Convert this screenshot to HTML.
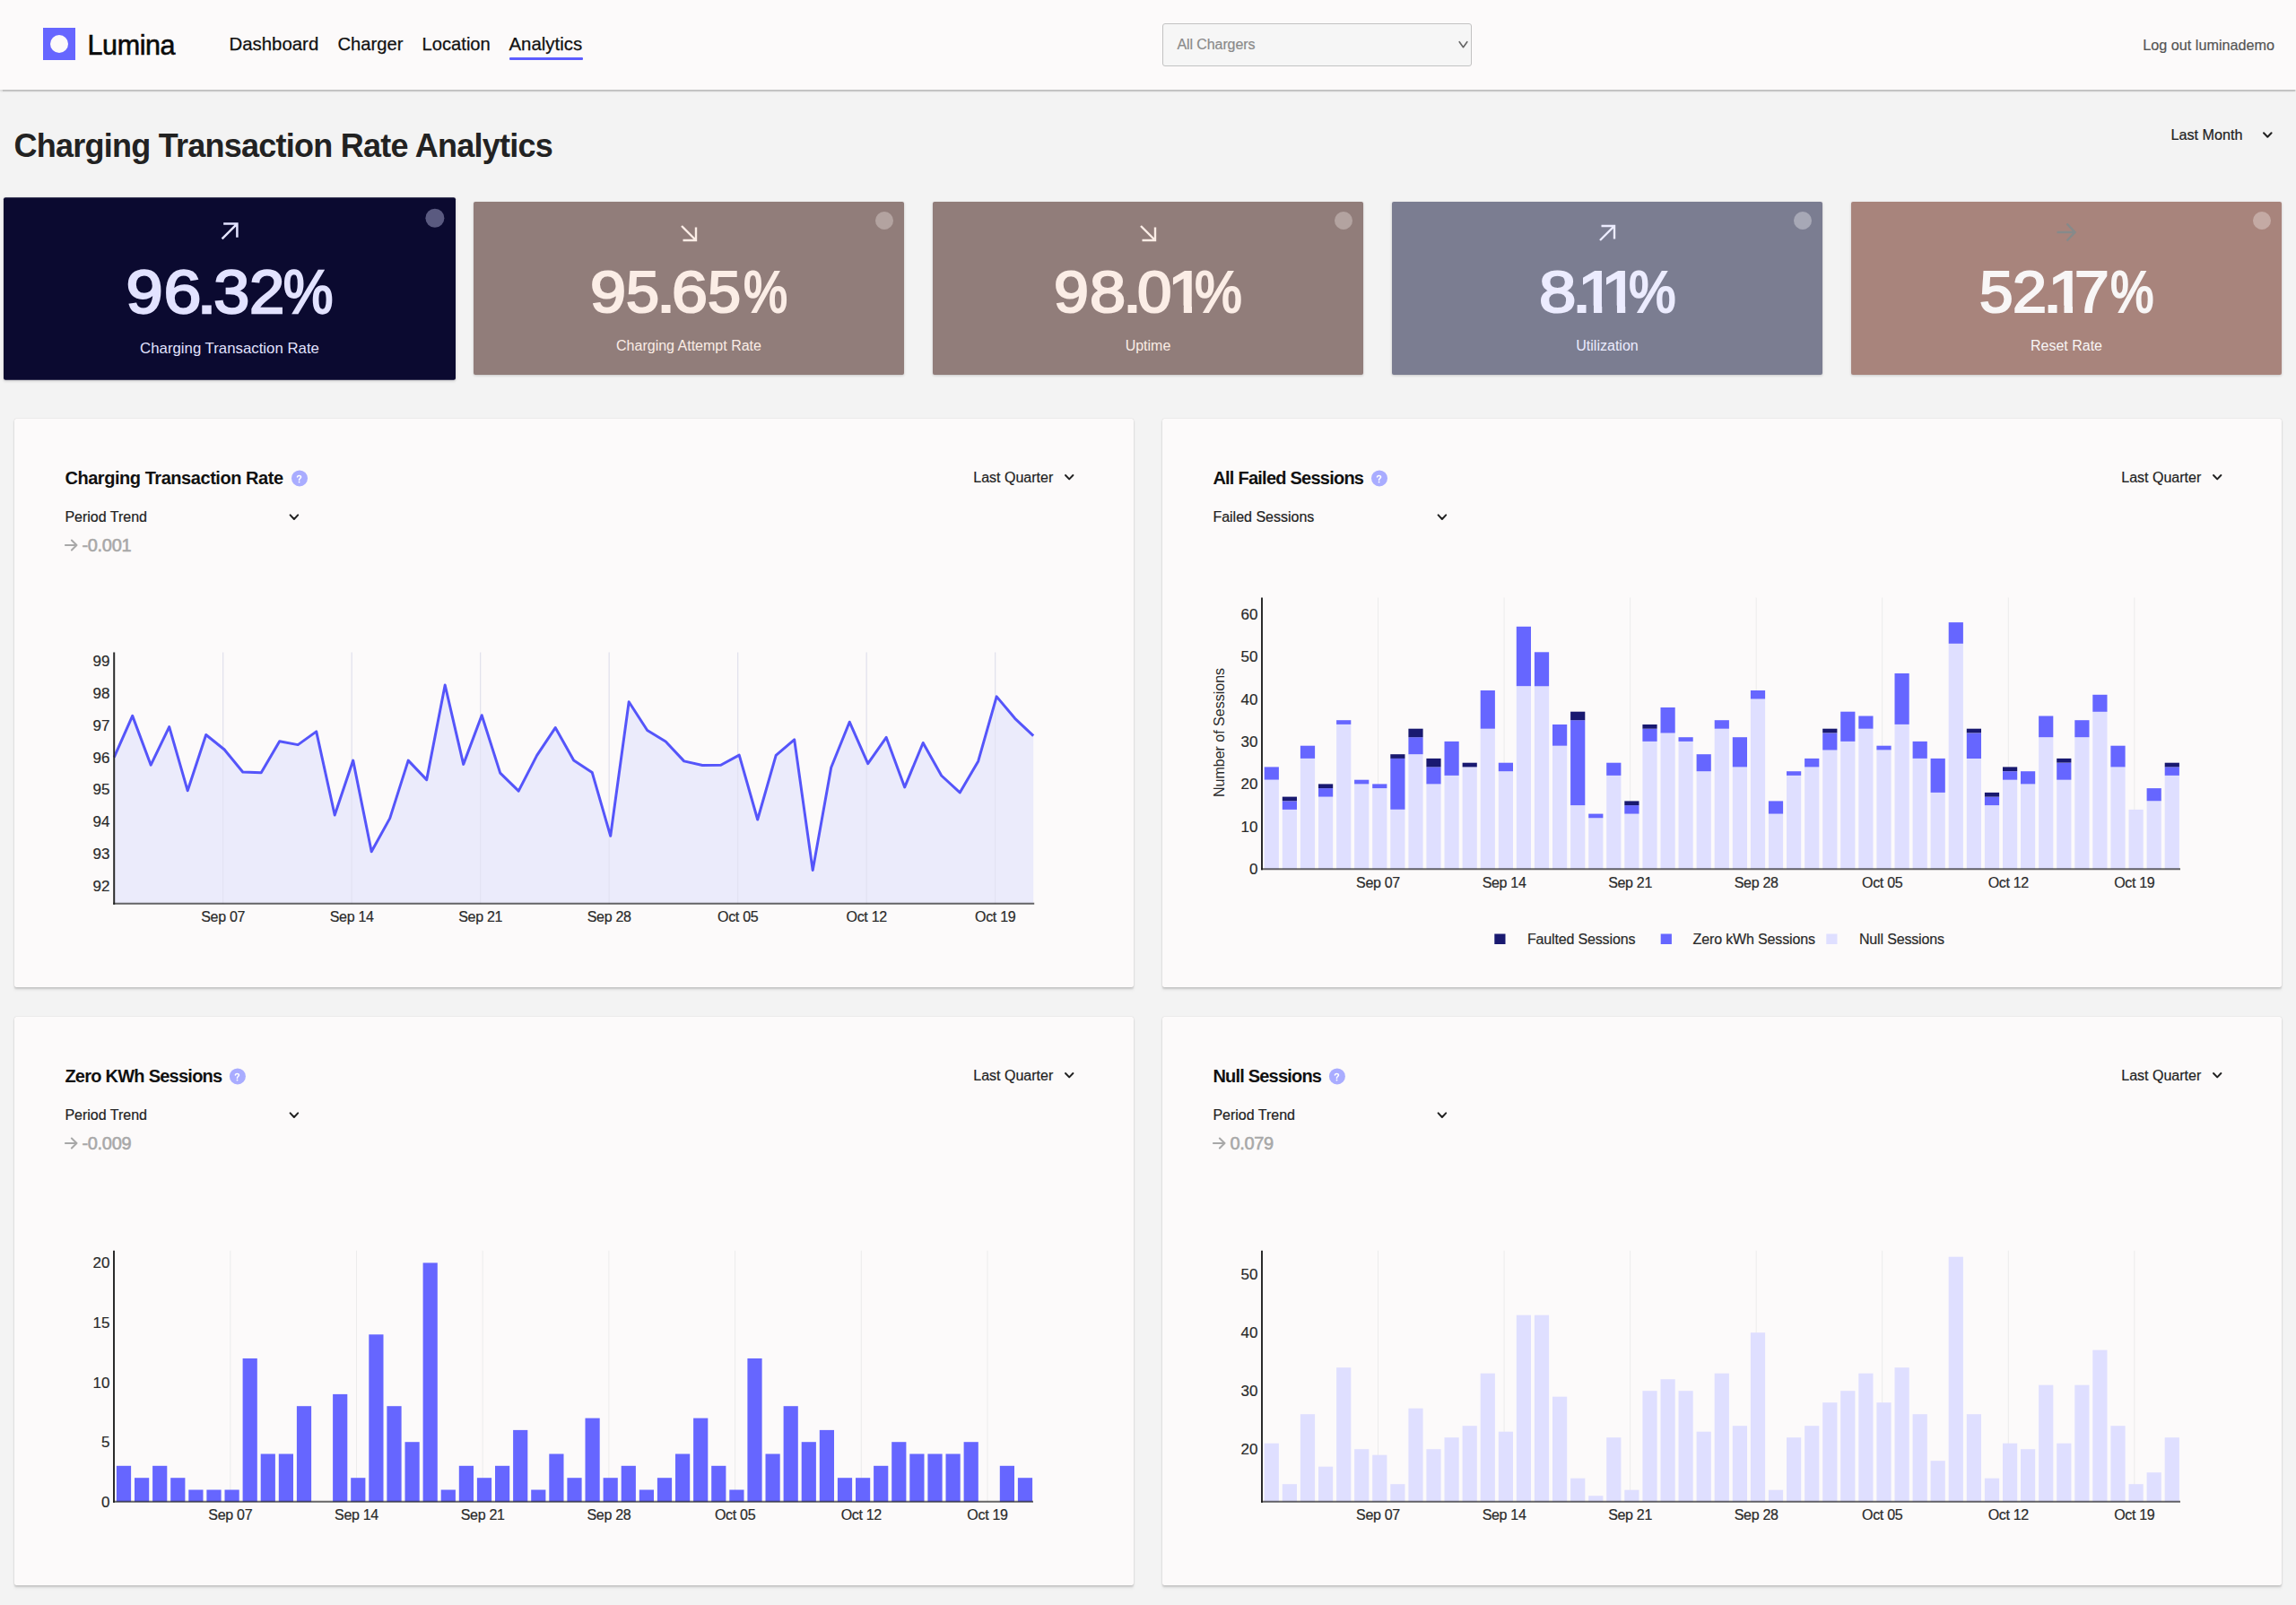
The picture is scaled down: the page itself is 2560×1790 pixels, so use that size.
<!DOCTYPE html>
<html><head><meta charset="utf-8"><title>Lumina Analytics</title>
<style>
*{box-sizing:border-box}
html,body{margin:0;padding:0}
body{width:2560px;height:1790px;overflow:hidden;background:#f3f3f3;font-family:"Liberation Sans", sans-serif;position:relative}
.t{position:absolute;white-space:nowrap;line-height:1;-webkit-text-stroke-width:0.2px}
.nav{-webkit-text-stroke:0.25px #111}
.hdr{position:absolute;left:0;top:0;width:2560px;height:99.5px;background:#fcfafa;box-shadow:0 1.5px 0.8px rgba(0,0,0,.14),0 2px 2.5px rgba(0,0,0,.08)}
.logo{position:absolute;left:48px;top:31.2px;width:36px;height:36px;background:#6666ff}
.logo:after{content:"";position:absolute;left:8px;top:8px;width:20px;height:20px;border-radius:50%;background:#fcfafa}
.uline{position:absolute;left:568px;top:63.5px;width:82px;height:3px;background:#5c5cff;border-radius:1px}
.sel{position:absolute;left:1296px;top:25.5px;width:345px;height:48px;border:1.5px solid #c2c2c2;border-radius:3px;background:#f6f6f6}
.card{position:absolute;border-radius:2px;box-shadow:0 1px 3px rgba(0,0,0,.18)}
.dot{position:absolute;right:12px;top:11.5px;width:20px;height:20px;border-radius:50%}
.arr{position:absolute}
.big{position:absolute;left:0;top:0;width:100%;height:100%}
.g{position:absolute;top:68.36px;font-size:63.5px;line-height:1;font-weight:400;-webkit-text-stroke:2.1px currentColor;transform-origin:0 0;white-space:nowrap}
.lab{position:absolute;left:0;width:100%;text-align:center;top:153.1px;font-size:16px;line-height:1;white-space:nowrap}
.panel{position:absolute;background:#fcfafa;border-radius:2px;box-shadow:0 2px 1.6px rgba(0,0,0,.1),0 2.5px 3.5px rgba(0,0,0,.08),0 0 1.2px rgba(0,0,0,.2)}
svg.ov{position:absolute;left:0;top:0;font-family:"Liberation Sans", sans-serif}
</style></head><body>
<div class="hdr"></div>
<div class="logo"></div>
<div class="t" style="left:97.5px;top:35.0px;font-size:30.5px;font-weight:400;color:#0a0a0a;-webkit-text-stroke:0.6px #0a0a0a;letter-spacing:-0.4px">Lumina</div>
<div class="t nav" style="left:255.5px;top:39.1px;font-size:20.4px;font-weight:400;color:#111;letter-spacing:0px">Dashboard</div>
<div class="t nav" style="left:376.5px;top:39.3px;font-size:20.2px;font-weight:400;color:#111;letter-spacing:0px">Charger</div>
<div class="t nav" style="left:470.5px;top:39.3px;font-size:20.2px;font-weight:400;color:#111;letter-spacing:0px">Location</div>
<div class="t nav" style="left:567.5px;top:39.1px;font-size:20.4px;font-weight:400;color:#111;letter-spacing:0px">Analytics</div>
<div class="uline"></div>
<div class="sel"></div>
<div class="t" style="left:1312.5px;top:42.0px;font-size:16px;font-weight:400;color:#8a8a8a;letter-spacing:-0.1px">All Chargers</div>
<div class="t" style="right:24.0px;top:41.7px;font-size:16.2px;font-weight:400;color:#555;letter-spacing:0px">Log out luminademo</div>
<div class="t" style="left:15.5px;top:144.9px;font-size:36px;font-weight:700;color:#222;letter-spacing:-0.75px;-webkit-text-stroke-width:0">Charging Transaction Rate Analytics</div>
<div class="t" style="left:2420.5px;top:142.4px;font-size:16.2px;font-weight:400;color:#222;letter-spacing:0px">Last Month</div>
<div class="card" style="left:16px;top:224.6px;width:480px;height:193.8px;background:#0b0a30;transform:scale(1.05);">
<div class="dot" style="background:#5a5a80"></div>
<svg class="arr" width="22" height="22" viewBox="0 0 22 22" style="left:228.5px;top:24.8px"><path d="M3,19 L19,3 M4.5,3 H19 V17.5" fill="none" stroke="#e2e2ff" stroke-width="2.4" stroke-linecap="butt" stroke-linejoin="miter"/></svg>
<div class="big" style="color:#e2e2ff"><span class="g" style="left:129.68px;transform:scale(1.1101,1.03)">9</span><span class="g" style="left:170.02px;transform:scale(1.1310,1.03)">6</span><span class="g" style="left:205.07px;transform:scale(1.2143,1.03)">.</span><span class="g" style="left:223.49px;transform:scale(1.0794,1.03)">3</span><span class="g" style="left:261.31px;transform:scale(1.0599,1.03)">2</span><span class="g" style="left:296.96px;transform:scale(0.9400,1.03)">%</span></div>
<div class="lab" style="color:#e2e2ff">Charging Transaction Rate</div>
</div><div class="card" style="left:528px;top:224.6px;width:480px;height:193.8px;background:#917d7a;">
<div class="dot" style="background:#b3a3a0"></div>
<svg class="arr" width="22" height="22" viewBox="0 0 22 22" style="left:228.5px;top:24.8px"><path d="M3,3 L19,19 M19,4.5 V19 H4.5" fill="none" stroke="#fbede6" stroke-width="2.4" stroke-linecap="butt" stroke-linejoin="miter"/></svg>
<div class="big" style="color:#fbede6"><span class="g" style="left:129.53px;transform:scale(1.1344,1.03)">9</span><span class="g" style="left:170.35px;transform:scale(1.0485,1.03)">5</span><span class="g" style="left:204.00px;transform:scale(1.2000,1.03)">.</span><span class="g" style="left:220.74px;transform:scale(1.1313,1.03)">6</span><span class="g" style="left:260.95px;transform:scale(1.0485,1.03)">5</span><span class="g" style="left:301.33px;transform:scale(0.8704,1.03)">%</span></div>
<div class="lab" style="color:#fbede6">Charging Attempt Rate</div>
</div><div class="card" style="left:1040px;top:224.6px;width:480px;height:193.8px;background:#917d7a;">
<div class="dot" style="background:#b3a3a0"></div>
<svg class="arr" width="22" height="22" viewBox="0 0 22 22" style="left:228.5px;top:24.8px"><path d="M3,3 L19,19 M19,4.5 V19 H4.5" fill="none" stroke="#fbede6" stroke-width="2.4" stroke-linecap="butt" stroke-linejoin="miter"/></svg>
<div class="big" style="color:#fbede6"><span class="g" style="left:135.19px;transform:scale(1.1031,1.03)">9</span><span class="g" style="left:174.93px;transform:scale(1.1375,1.03)">8</span><span class="g" style="left:211.66px;transform:scale(1.1875,1.03)">.</span><span class="g" style="left:228.21px;transform:scale(1.0879,1.03)">0</span><span class="g" style="left:261.61px;transform:scale(1.1784,1.03);clip-path:polygon(0 0,100% 0,100% 46.4px,22.9px 46.4px,22.9px 100%,15.1px 100%,15.1px 46.4px,0 46.4px)">1</span><span class="g" style="left:291.76px;transform:scale(0.9352,1.03)">%</span></div>
<div class="lab" style="color:#fbede6">Uptime</div>
</div><div class="card" style="left:1552px;top:224.6px;width:480px;height:193.8px;background:#7b7d91;">
<div class="dot" style="background:#a7a8b6"></div>
<svg class="arr" width="22" height="22" viewBox="0 0 22 22" style="left:228.5px;top:24.8px"><path d="M3,19 L19,3 M4.5,3 H19 V17.5" fill="none" stroke="#ececff" stroke-width="2.4" stroke-linecap="butt" stroke-linejoin="miter"/></svg>
<div class="big" style="color:#ececff"><span class="g" style="left:163.56px;transform:scale(1.1719,1.03)">8</span><span class="g" style="left:200.60px;transform:scale(1.2000,1.03)">.</span><span class="g" style="left:207.05px;transform:scale(1.1892,1.03);clip-path:polygon(0 0,100% 0,100% 46.4px,22.9px 46.4px,22.9px 100%,15.1px 100%,15.1px 46.4px,0 46.4px)">1</span><span class="g" style="left:232.65px;transform:scale(1.1892,1.03);clip-path:polygon(0 0,100% 0,100% 46.4px,22.9px 46.4px,22.9px 100%,15.1px 100%,15.1px 46.4px,0 46.4px)">1</span><span class="g" style="left:263.77px;transform:scale(0.9315,1.03)">%</span></div>
<div class="lab" style="color:#ececff">Utilization</div>
</div><div class="card" style="left:2064px;top:224.6px;width:480px;height:193.8px;background:#a8847c;">
<div class="dot" style="background:#c4aaa4"></div>
<svg class="arr" width="22" height="22" viewBox="0 0 22 22" style="left:228.5px;top:24.8px"><path d="M0.5,10 H20.5 M11.5,0.5 L20.5,10 L11.5,19.5" fill="none" stroke="#868a8a" stroke-width="2.4" stroke-linecap="butt" stroke-linejoin="miter"/></svg>
<div class="big" style="color:#f8f6f6"><span class="g" style="left:143.24px;transform:scale(1.0636,1.03)">5</span><span class="g" style="left:180.05px;transform:scale(1.0774,1.03)">2</span><span class="g" style="left:213.60px;transform:scale(1.2000,1.03)">.</span><span class="g" style="left:219.19px;transform:scale(1.2216,1.03);clip-path:polygon(0 0,100% 0,100% 46.4px,22.9px 46.4px,22.9px 100%,15.1px 100%,15.1px 46.4px,0 46.4px)">1</span><span class="g" style="left:248.61px;transform:scale(1.0935,1.03)">7</span><span class="g" style="left:288.94px;transform:scale(0.8593,1.03)">%</span></div>
<div class="lab" style="color:#f8f6f6">Reset Rate</div>
</div>
<div class="panel" style="left:16px;top:467px;width:1248px;height:633.5px"></div>
<div class="panel" style="left:1296px;top:467px;width:1248px;height:633.5px"></div>
<div class="panel" style="left:16px;top:1133.7px;width:1248px;height:634.3px"></div>
<div class="panel" style="left:1296px;top:1133.7px;width:1248px;height:634.3px"></div>
<div class="t" style="left:72.4px;top:523.4px;font-size:20px;font-weight:700;color:#111;letter-spacing:-0.45px;-webkit-text-stroke-width:0">Charging Transaction Rate</div>
<div class="t" style="left:1085.3px;top:524.8px;font-size:16px;font-weight:400;color:#222;letter-spacing:0px">Last Quarter</div>
<div class="t" style="left:72.4px;top:569.1px;font-size:16px;font-weight:400;color:#222;letter-spacing:0px">Period Trend</div>
<div class="t" style="left:91.4px;top:597.6px;font-size:20px;font-weight:400;color:#a8a8a8;-webkit-text-stroke:0.55px #a8a8a8;letter-spacing:-0.3px">-0.001</div>
<div class="t" style="left:1352.4px;top:523.4px;font-size:20px;font-weight:700;color:#111;letter-spacing:-0.76px;-webkit-text-stroke-width:0">All Failed Sessions</div>
<div class="t" style="left:2365.3px;top:524.8px;font-size:16px;font-weight:400;color:#222;letter-spacing:0px">Last Quarter</div>
<div class="t" style="left:1352.4px;top:569.1px;font-size:16px;font-weight:400;color:#222;letter-spacing:0px">Failed Sessions</div>
<div class="t" style="left:72.4px;top:1190.4px;font-size:20px;font-weight:700;color:#111;letter-spacing:-0.75px;-webkit-text-stroke-width:0">Zero KWh Sessions</div>
<div class="t" style="left:1085.3px;top:1191.8px;font-size:16px;font-weight:400;color:#222;letter-spacing:0px">Last Quarter</div>
<div class="t" style="left:72.4px;top:1236.1px;font-size:16px;font-weight:400;color:#222;letter-spacing:0px">Period Trend</div>
<div class="t" style="left:91.4px;top:1264.6px;font-size:20px;font-weight:400;color:#a8a8a8;-webkit-text-stroke:0.55px #a8a8a8;letter-spacing:-0.3px">-0.009</div>
<div class="t" style="left:1352.4px;top:1190.4px;font-size:20px;font-weight:700;color:#111;letter-spacing:-0.8px;-webkit-text-stroke-width:0">Null Sessions</div>
<div class="t" style="left:2365.3px;top:1191.8px;font-size:16px;font-weight:400;color:#222;letter-spacing:0px">Last Quarter</div>
<div class="t" style="left:1352.4px;top:1236.1px;font-size:16px;font-weight:400;color:#222;letter-spacing:0px">Period Trend</div>
<div class="t" style="left:1371.4px;top:1264.6px;font-size:20px;font-weight:400;color:#a8a8a8;-webkit-text-stroke:0.55px #a8a8a8;letter-spacing:-0.3px">0.079</div>
<svg class="ov" width="2560" height="1790" viewBox="0 0 2560 1790">
<polyline points="2524.0,148.2 2528.3,152.8 2532.6,148.2" fill="none" stroke="#222" stroke-width="2.0" stroke-linecap="round" stroke-linejoin="round"/>
<polyline points="1627.2,46.7 1631.5,52.7 1635.8,46.7" fill="none" stroke="#666" stroke-width="1.6" stroke-linecap="round" stroke-linejoin="round"/>
<circle cx="334" cy="533.4" r="9" fill="#a9acff"/><path d="M331.50,532.10 C331.50,529.90 335.60,529.80 335.60,532.10 C335.60,533.30 333.60,533.80 333.60,535.10 v0.5" fill="none" stroke="#fff" stroke-width="1.5" stroke-linecap="round"/><circle cx="333.60" cy="537.60" r="0.95" fill="#fff"/>
<polyline points="1188.0,530.0 1192.2,534.4 1196.4,530.0" fill="none" stroke="#222" stroke-width="2.0" stroke-linecap="round" stroke-linejoin="round"/>
<polyline points="323.6,574.4 327.9,579.0 332.2,574.4" fill="none" stroke="#222" stroke-width="2.0" stroke-linecap="round" stroke-linejoin="round"/>
<path d="M72.9,608 h12.6 M79.9,602.5 l5.6,5.5 l-5.6,5.5" fill="none" stroke="#a8a8a8" stroke-width="2" stroke-linecap="round" stroke-linejoin="round"/>
<circle cx="1538" cy="533.4" r="9" fill="#a9acff"/><path d="M1535.50,532.10 C1535.50,529.90 1539.60,529.80 1539.60,532.10 C1539.60,533.30 1537.60,533.80 1537.60,535.10 v0.5" fill="none" stroke="#fff" stroke-width="1.5" stroke-linecap="round"/><circle cx="1537.60" cy="537.60" r="0.95" fill="#fff"/>
<polyline points="2468.0,530.0 2472.2,534.4 2476.4,530.0" fill="none" stroke="#222" stroke-width="2.0" stroke-linecap="round" stroke-linejoin="round"/>
<polyline points="1603.6,574.4 1607.9,579.0 1612.2,574.4" fill="none" stroke="#222" stroke-width="2.0" stroke-linecap="round" stroke-linejoin="round"/>
<circle cx="264.9" cy="1200.4" r="9" fill="#a9acff"/><path d="M262.40,1199.10 C262.40,1196.90 266.50,1196.80 266.50,1199.10 C266.50,1200.30 264.50,1200.80 264.50,1202.10 v0.5" fill="none" stroke="#fff" stroke-width="1.5" stroke-linecap="round"/><circle cx="264.50" cy="1204.60" r="0.95" fill="#fff"/>
<polyline points="1188.0,1197.0 1192.2,1201.4 1196.4,1197.0" fill="none" stroke="#222" stroke-width="2.0" stroke-linecap="round" stroke-linejoin="round"/>
<polyline points="323.6,1241.4 327.9,1246.0 332.2,1241.4" fill="none" stroke="#222" stroke-width="2.0" stroke-linecap="round" stroke-linejoin="round"/>
<path d="M72.9,1275 h12.6 M79.9,1269.5 l5.6,5.5 l-5.6,5.5" fill="none" stroke="#a8a8a8" stroke-width="2" stroke-linecap="round" stroke-linejoin="round"/>
<circle cx="1490.9" cy="1200.4" r="9" fill="#a9acff"/><path d="M1488.40,1199.10 C1488.40,1196.90 1492.50,1196.80 1492.50,1199.10 C1492.50,1200.30 1490.50,1200.80 1490.50,1202.10 v0.5" fill="none" stroke="#fff" stroke-width="1.5" stroke-linecap="round"/><circle cx="1490.50" cy="1204.60" r="0.95" fill="#fff"/>
<polyline points="2468.0,1197.0 2472.2,1201.4 2476.4,1197.0" fill="none" stroke="#222" stroke-width="2.0" stroke-linecap="round" stroke-linejoin="round"/>
<polyline points="1603.6,1241.4 1607.9,1246.0 1612.2,1241.4" fill="none" stroke="#222" stroke-width="2.0" stroke-linecap="round" stroke-linejoin="round"/>
<path d="M1352.9,1275 h12.6 M1359.9,1269.5 l5.6,5.5 l-5.6,5.5" fill="none" stroke="#a8a8a8" stroke-width="2" stroke-linecap="round" stroke-linejoin="round"/>
<line x1="248.7" y1="727.6" x2="248.7" y2="1007.8" stroke="#e6e6ee" stroke-width="1"/>
<line x1="392.2" y1="727.6" x2="392.2" y2="1007.8" stroke="#e6e6ee" stroke-width="1"/>
<line x1="535.7" y1="727.6" x2="535.7" y2="1007.8" stroke="#e6e6ee" stroke-width="1"/>
<line x1="679.2" y1="727.6" x2="679.2" y2="1007.8" stroke="#e6e6ee" stroke-width="1"/>
<line x1="822.7" y1="727.6" x2="822.7" y2="1007.8" stroke="#e6e6ee" stroke-width="1"/>
<line x1="966.2" y1="727.6" x2="966.2" y2="1007.8" stroke="#e6e6ee" stroke-width="1"/>
<line x1="1109.7" y1="727.6" x2="1109.7" y2="1007.8" stroke="#e6e6ee" stroke-width="1"/>
<polygon points="127.2,1007.8 127.2,844.6 147.7,798.4 168.2,853.2 188.7,810.6 209.2,881.8 229.7,819.5 250.2,836.0 270.7,861.0 291.2,861.7 311.7,826.7 332.2,830.6 352.7,815.9 373.2,909.0 393.7,848.1 414.2,949.8 434.7,912.6 455.2,848.1 475.7,869.6 496.2,764.0 516.7,852.4 537.2,797.7 557.7,862.1 578.2,882.1 598.7,842.4 619.2,811.6 639.7,848.1 660.2,861.4 680.7,932.3 701.2,782.7 721.7,814.5 742.2,827.0 762.7,848.9 783.2,853.5 803.7,853.2 824.2,842.1 844.7,914.0 865.2,842.4 885.7,824.9 906.2,970.6 926.7,856.0 947.2,805.2 967.7,851.7 988.2,822.4 1008.7,877.9 1029.2,828.5 1049.7,865.0 1070.2,883.9 1090.7,848.9 1111.2,776.9 1131.7,801.3 1152.2,820.6 1152.2,1007.8" fill="#ebebfb"/>
<line x1="248.7" y1="727.6" x2="248.7" y2="1007.8" stroke="#dcdcec" stroke-width="1" opacity="0.6"/>
<line x1="392.2" y1="727.6" x2="392.2" y2="1007.8" stroke="#dcdcec" stroke-width="1" opacity="0.6"/>
<line x1="535.7" y1="727.6" x2="535.7" y2="1007.8" stroke="#dcdcec" stroke-width="1" opacity="0.6"/>
<line x1="679.2" y1="727.6" x2="679.2" y2="1007.8" stroke="#dcdcec" stroke-width="1" opacity="0.6"/>
<line x1="822.7" y1="727.6" x2="822.7" y2="1007.8" stroke="#dcdcec" stroke-width="1" opacity="0.6"/>
<line x1="966.2" y1="727.6" x2="966.2" y2="1007.8" stroke="#dcdcec" stroke-width="1" opacity="0.6"/>
<line x1="1109.7" y1="727.6" x2="1109.7" y2="1007.8" stroke="#dcdcec" stroke-width="1" opacity="0.6"/>
<polyline points="127.2,844.6 147.7,798.4 168.2,853.2 188.7,810.6 209.2,881.8 229.7,819.5 250.2,836.0 270.7,861.0 291.2,861.7 311.7,826.7 332.2,830.6 352.7,815.9 373.2,909.0 393.7,848.1 414.2,949.8 434.7,912.6 455.2,848.1 475.7,869.6 496.2,764.0 516.7,852.4 537.2,797.7 557.7,862.1 578.2,882.1 598.7,842.4 619.2,811.6 639.7,848.1 660.2,861.4 680.7,932.3 701.2,782.7 721.7,814.5 742.2,827.0 762.7,848.9 783.2,853.5 803.7,853.2 824.2,842.1 844.7,914.0 865.2,842.4 885.7,824.9 906.2,970.6 926.7,856.0 947.2,805.2 967.7,851.7 988.2,822.4 1008.7,877.9 1029.2,828.5 1049.7,865.0 1070.2,883.9 1090.7,848.9 1111.2,776.9 1131.7,801.3 1152.2,820.6" fill="none" stroke="#5555fa" stroke-width="3" stroke-linejoin="round"/>
<line x1="127.2" y1="727.6" x2="127.2" y2="1008.8" stroke="#2b2b2b" stroke-width="2"/>
<line x1="126.2" y1="1007.8" x2="1153.2" y2="1007.8" stroke="rgba(25,25,25,0.66)" stroke-width="2"/>
<text x="122.5" y="993.7" text-anchor="end" font-size="17" fill="#2a2a2a" stroke="#2a2a2a" stroke-width="0.2" >92</text>
<text x="122.5" y="957.9" text-anchor="end" font-size="17" fill="#2a2a2a" stroke="#2a2a2a" stroke-width="0.2" >93</text>
<text x="122.5" y="922.2" text-anchor="end" font-size="17" fill="#2a2a2a" stroke="#2a2a2a" stroke-width="0.2" >94</text>
<text x="122.5" y="886.4" text-anchor="end" font-size="17" fill="#2a2a2a" stroke="#2a2a2a" stroke-width="0.2" >95</text>
<text x="122.5" y="850.6" text-anchor="end" font-size="17" fill="#2a2a2a" stroke="#2a2a2a" stroke-width="0.2" >96</text>
<text x="122.5" y="814.8" text-anchor="end" font-size="17" fill="#2a2a2a" stroke="#2a2a2a" stroke-width="0.2" >97</text>
<text x="122.5" y="779.0" text-anchor="end" font-size="17" fill="#2a2a2a" stroke="#2a2a2a" stroke-width="0.2" >98</text>
<text x="122.5" y="743.2" text-anchor="end" font-size="17" fill="#2a2a2a" stroke="#2a2a2a" stroke-width="0.2" >99</text>
<text x="248.7" y="1028.0" text-anchor="middle" font-size="16" fill="#2a2a2a" stroke="#2a2a2a" stroke-width="0.2" letter-spacing="-0.3">Sep 07</text>
<text x="392.2" y="1028.0" text-anchor="middle" font-size="16" fill="#2a2a2a" stroke="#2a2a2a" stroke-width="0.2" letter-spacing="-0.3">Sep 14</text>
<text x="535.7" y="1028.0" text-anchor="middle" font-size="16" fill="#2a2a2a" stroke="#2a2a2a" stroke-width="0.2" letter-spacing="-0.3">Sep 21</text>
<text x="679.2" y="1028.0" text-anchor="middle" font-size="16" fill="#2a2a2a" stroke="#2a2a2a" stroke-width="0.2" letter-spacing="-0.3">Sep 28</text>
<text x="822.7" y="1028.0" text-anchor="middle" font-size="16" fill="#2a2a2a" stroke="#2a2a2a" stroke-width="0.2" letter-spacing="-0.3">Oct 05</text>
<text x="966.2" y="1028.0" text-anchor="middle" font-size="16" fill="#2a2a2a" stroke="#2a2a2a" stroke-width="0.2" letter-spacing="-0.3">Oct 12</text>
<text x="1109.7" y="1028.0" text-anchor="middle" font-size="16" fill="#2a2a2a" stroke="#2a2a2a" stroke-width="0.2" letter-spacing="-0.3">Oct 19</text>
<line x1="1536.5" y1="666.5" x2="1536.5" y2="969.3" stroke="#ececec" stroke-width="1"/>
<line x1="1677.1" y1="666.5" x2="1677.1" y2="969.3" stroke="#ececec" stroke-width="1"/>
<line x1="1817.6" y1="666.5" x2="1817.6" y2="969.3" stroke="#ececec" stroke-width="1"/>
<line x1="1958.2" y1="666.5" x2="1958.2" y2="969.3" stroke="#ececec" stroke-width="1"/>
<line x1="2098.7" y1="666.5" x2="2098.7" y2="969.3" stroke="#ececec" stroke-width="1"/>
<line x1="2239.3" y1="666.5" x2="2239.3" y2="969.3" stroke="#ececec" stroke-width="1"/>
<line x1="2379.8" y1="666.5" x2="2379.8" y2="969.3" stroke="#ececec" stroke-width="1"/>
<rect x="1409.7" y="869.7" width="16.2" height="99.6" fill="#dfdfff"/>
<rect x="1409.7" y="855.4" width="16.2" height="14.2" fill="#6666ff"/>
<rect x="1429.8" y="902.9" width="16.2" height="66.4" fill="#dfdfff"/>
<rect x="1429.8" y="893.4" width="16.2" height="9.5" fill="#6666ff"/>
<rect x="1429.8" y="888.6" width="16.2" height="4.7" fill="#191970"/>
<rect x="1449.9" y="845.9" width="16.2" height="123.4" fill="#dfdfff"/>
<rect x="1449.9" y="831.7" width="16.2" height="14.2" fill="#6666ff"/>
<rect x="1470.0" y="888.6" width="16.2" height="80.7" fill="#dfdfff"/>
<rect x="1470.0" y="879.1" width="16.2" height="9.5" fill="#6666ff"/>
<rect x="1470.0" y="874.4" width="16.2" height="4.7" fill="#191970"/>
<rect x="1490.1" y="808.0" width="16.2" height="161.3" fill="#dfdfff"/>
<rect x="1490.1" y="803.2" width="16.2" height="4.7" fill="#6666ff"/>
<rect x="1510.1" y="874.4" width="16.2" height="94.9" fill="#dfdfff"/>
<rect x="1510.1" y="869.7" width="16.2" height="4.7" fill="#6666ff"/>
<rect x="1530.2" y="879.1" width="16.2" height="90.2" fill="#dfdfff"/>
<rect x="1530.2" y="874.4" width="16.2" height="4.7" fill="#6666ff"/>
<rect x="1550.3" y="902.9" width="16.2" height="66.4" fill="#dfdfff"/>
<rect x="1550.3" y="845.9" width="16.2" height="56.9" fill="#6666ff"/>
<rect x="1550.3" y="841.2" width="16.2" height="4.7" fill="#191970"/>
<rect x="1570.4" y="841.2" width="16.2" height="128.1" fill="#dfdfff"/>
<rect x="1570.4" y="822.2" width="16.2" height="19.0" fill="#6666ff"/>
<rect x="1570.4" y="812.7" width="16.2" height="9.5" fill="#191970"/>
<rect x="1590.4" y="874.4" width="16.2" height="94.9" fill="#dfdfff"/>
<rect x="1590.4" y="855.4" width="16.2" height="19.0" fill="#6666ff"/>
<rect x="1590.4" y="845.9" width="16.2" height="9.5" fill="#191970"/>
<rect x="1610.5" y="864.9" width="16.2" height="104.4" fill="#dfdfff"/>
<rect x="1610.5" y="826.9" width="16.2" height="38.0" fill="#6666ff"/>
<rect x="1630.6" y="855.4" width="16.2" height="113.9" fill="#dfdfff"/>
<rect x="1630.6" y="850.7" width="16.2" height="4.7" fill="#191970"/>
<rect x="1650.7" y="812.7" width="16.2" height="156.6" fill="#dfdfff"/>
<rect x="1650.7" y="770.0" width="16.2" height="42.7" fill="#6666ff"/>
<rect x="1670.8" y="860.2" width="16.2" height="109.1" fill="#dfdfff"/>
<rect x="1670.8" y="850.7" width="16.2" height="9.5" fill="#6666ff"/>
<rect x="1690.8" y="765.3" width="16.2" height="204.0" fill="#dfdfff"/>
<rect x="1690.8" y="698.8" width="16.2" height="66.4" fill="#6666ff"/>
<rect x="1710.9" y="765.3" width="16.2" height="204.0" fill="#dfdfff"/>
<rect x="1710.9" y="727.3" width="16.2" height="38.0" fill="#6666ff"/>
<rect x="1731.0" y="831.7" width="16.2" height="137.6" fill="#dfdfff"/>
<rect x="1731.0" y="808.0" width="16.2" height="23.7" fill="#6666ff"/>
<rect x="1751.1" y="898.1" width="16.2" height="71.2" fill="#dfdfff"/>
<rect x="1751.1" y="803.2" width="16.2" height="94.9" fill="#6666ff"/>
<rect x="1751.1" y="793.7" width="16.2" height="9.5" fill="#191970"/>
<rect x="1771.2" y="912.4" width="16.2" height="56.9" fill="#dfdfff"/>
<rect x="1771.2" y="907.6" width="16.2" height="4.7" fill="#6666ff"/>
<rect x="1791.2" y="864.9" width="16.2" height="104.4" fill="#dfdfff"/>
<rect x="1791.2" y="850.7" width="16.2" height="14.2" fill="#6666ff"/>
<rect x="1811.3" y="907.6" width="16.2" height="61.7" fill="#dfdfff"/>
<rect x="1811.3" y="898.1" width="16.2" height="9.5" fill="#6666ff"/>
<rect x="1811.3" y="893.4" width="16.2" height="4.7" fill="#191970"/>
<rect x="1831.4" y="826.9" width="16.2" height="142.4" fill="#dfdfff"/>
<rect x="1831.4" y="812.7" width="16.2" height="14.2" fill="#6666ff"/>
<rect x="1831.4" y="808.0" width="16.2" height="4.7" fill="#191970"/>
<rect x="1851.5" y="817.5" width="16.2" height="151.8" fill="#dfdfff"/>
<rect x="1851.5" y="789.0" width="16.2" height="28.5" fill="#6666ff"/>
<rect x="1871.5" y="826.9" width="16.2" height="142.4" fill="#dfdfff"/>
<rect x="1871.5" y="822.2" width="16.2" height="4.7" fill="#6666ff"/>
<rect x="1891.6" y="860.2" width="16.2" height="109.1" fill="#dfdfff"/>
<rect x="1891.6" y="841.2" width="16.2" height="19.0" fill="#6666ff"/>
<rect x="1911.7" y="812.7" width="16.2" height="156.6" fill="#dfdfff"/>
<rect x="1911.7" y="803.2" width="16.2" height="9.5" fill="#6666ff"/>
<rect x="1931.8" y="855.4" width="16.2" height="113.9" fill="#dfdfff"/>
<rect x="1931.8" y="822.2" width="16.2" height="33.2" fill="#6666ff"/>
<rect x="1951.9" y="779.5" width="16.2" height="189.8" fill="#dfdfff"/>
<rect x="1951.9" y="770.0" width="16.2" height="9.5" fill="#6666ff"/>
<rect x="1971.9" y="907.6" width="16.2" height="61.7" fill="#dfdfff"/>
<rect x="1971.9" y="893.4" width="16.2" height="14.2" fill="#6666ff"/>
<rect x="1992.0" y="864.9" width="16.2" height="104.4" fill="#dfdfff"/>
<rect x="1992.0" y="860.2" width="16.2" height="4.7" fill="#6666ff"/>
<rect x="2012.1" y="855.4" width="16.2" height="113.9" fill="#dfdfff"/>
<rect x="2012.1" y="845.9" width="16.2" height="9.5" fill="#6666ff"/>
<rect x="2032.2" y="836.4" width="16.2" height="132.9" fill="#dfdfff"/>
<rect x="2032.2" y="817.5" width="16.2" height="19.0" fill="#6666ff"/>
<rect x="2032.2" y="812.7" width="16.2" height="4.7" fill="#191970"/>
<rect x="2052.2" y="826.9" width="16.2" height="142.4" fill="#dfdfff"/>
<rect x="2052.2" y="793.7" width="16.2" height="33.2" fill="#6666ff"/>
<rect x="2072.3" y="812.7" width="16.2" height="156.6" fill="#dfdfff"/>
<rect x="2072.3" y="798.5" width="16.2" height="14.2" fill="#6666ff"/>
<rect x="2092.4" y="836.4" width="16.2" height="132.9" fill="#dfdfff"/>
<rect x="2092.4" y="831.7" width="16.2" height="4.7" fill="#6666ff"/>
<rect x="2112.5" y="808.0" width="16.2" height="161.3" fill="#dfdfff"/>
<rect x="2112.5" y="751.0" width="16.2" height="56.9" fill="#6666ff"/>
<rect x="2132.6" y="845.9" width="16.2" height="123.4" fill="#dfdfff"/>
<rect x="2132.6" y="826.9" width="16.2" height="19.0" fill="#6666ff"/>
<rect x="2152.6" y="883.9" width="16.2" height="85.4" fill="#dfdfff"/>
<rect x="2152.6" y="845.9" width="16.2" height="38.0" fill="#6666ff"/>
<rect x="2172.7" y="717.8" width="16.2" height="251.5" fill="#dfdfff"/>
<rect x="2172.7" y="694.1" width="16.2" height="23.7" fill="#6666ff"/>
<rect x="2192.8" y="845.9" width="16.2" height="123.4" fill="#dfdfff"/>
<rect x="2192.8" y="817.5" width="16.2" height="28.5" fill="#6666ff"/>
<rect x="2192.8" y="812.7" width="16.2" height="4.7" fill="#191970"/>
<rect x="2212.9" y="898.1" width="16.2" height="71.2" fill="#dfdfff"/>
<rect x="2212.9" y="888.6" width="16.2" height="9.5" fill="#6666ff"/>
<rect x="2212.9" y="883.9" width="16.2" height="4.7" fill="#191970"/>
<rect x="2233.0" y="869.7" width="16.2" height="99.6" fill="#dfdfff"/>
<rect x="2233.0" y="860.2" width="16.2" height="9.5" fill="#6666ff"/>
<rect x="2233.0" y="855.4" width="16.2" height="4.7" fill="#191970"/>
<rect x="2253.0" y="874.4" width="16.2" height="94.9" fill="#dfdfff"/>
<rect x="2253.0" y="860.2" width="16.2" height="14.2" fill="#6666ff"/>
<rect x="2273.1" y="822.2" width="16.2" height="147.1" fill="#dfdfff"/>
<rect x="2273.1" y="798.5" width="16.2" height="23.7" fill="#6666ff"/>
<rect x="2293.2" y="869.7" width="16.2" height="99.6" fill="#dfdfff"/>
<rect x="2293.2" y="850.7" width="16.2" height="19.0" fill="#6666ff"/>
<rect x="2293.2" y="845.9" width="16.2" height="4.7" fill="#191970"/>
<rect x="2313.3" y="822.2" width="16.2" height="147.1" fill="#dfdfff"/>
<rect x="2313.3" y="803.2" width="16.2" height="19.0" fill="#6666ff"/>
<rect x="2333.3" y="793.7" width="16.2" height="175.6" fill="#dfdfff"/>
<rect x="2333.3" y="774.8" width="16.2" height="19.0" fill="#6666ff"/>
<rect x="2353.4" y="855.4" width="16.2" height="113.9" fill="#dfdfff"/>
<rect x="2353.4" y="831.7" width="16.2" height="23.7" fill="#6666ff"/>
<rect x="2373.5" y="902.9" width="16.2" height="66.4" fill="#dfdfff"/>
<rect x="2393.6" y="893.4" width="16.2" height="75.9" fill="#dfdfff"/>
<rect x="2393.6" y="879.1" width="16.2" height="14.2" fill="#6666ff"/>
<rect x="2413.7" y="864.9" width="16.2" height="104.4" fill="#dfdfff"/>
<rect x="2413.7" y="855.4" width="16.2" height="9.5" fill="#6666ff"/>
<rect x="2413.7" y="850.7" width="16.2" height="4.7" fill="#191970"/>
<line x1="1407.0" y1="666.5" x2="1407.0" y2="970.3" stroke="#2b2b2b" stroke-width="2"/>
<line x1="1406.0" y1="969.3" x2="2431.0" y2="969.3" stroke="rgba(25,25,25,0.66)" stroke-width="2"/>
<text x="1402.5" y="975.3" text-anchor="end" font-size="17" fill="#2a2a2a" stroke="#2a2a2a" stroke-width="0.2" >0</text>
<text x="1402.5" y="927.8" text-anchor="end" font-size="17" fill="#2a2a2a" stroke="#2a2a2a" stroke-width="0.2" >10</text>
<text x="1402.5" y="880.4" text-anchor="end" font-size="17" fill="#2a2a2a" stroke="#2a2a2a" stroke-width="0.2" >20</text>
<text x="1402.5" y="832.9" text-anchor="end" font-size="17" fill="#2a2a2a" stroke="#2a2a2a" stroke-width="0.2" >30</text>
<text x="1402.5" y="785.5" text-anchor="end" font-size="17" fill="#2a2a2a" stroke="#2a2a2a" stroke-width="0.2" >40</text>
<text x="1402.5" y="738.0" text-anchor="end" font-size="17" fill="#2a2a2a" stroke="#2a2a2a" stroke-width="0.2" >50</text>
<text x="1402.5" y="690.6" text-anchor="end" font-size="17" fill="#2a2a2a" stroke="#2a2a2a" stroke-width="0.2" >60</text>
<text x="1536.5" y="990.0" text-anchor="middle" font-size="16" fill="#2a2a2a" stroke="#2a2a2a" stroke-width="0.2" letter-spacing="-0.3">Sep 07</text>
<text x="1677.1" y="990.0" text-anchor="middle" font-size="16" fill="#2a2a2a" stroke="#2a2a2a" stroke-width="0.2" letter-spacing="-0.3">Sep 14</text>
<text x="1817.6" y="990.0" text-anchor="middle" font-size="16" fill="#2a2a2a" stroke="#2a2a2a" stroke-width="0.2" letter-spacing="-0.3">Sep 21</text>
<text x="1958.2" y="990.0" text-anchor="middle" font-size="16" fill="#2a2a2a" stroke="#2a2a2a" stroke-width="0.2" letter-spacing="-0.3">Sep 28</text>
<text x="2098.7" y="990.0" text-anchor="middle" font-size="16" fill="#2a2a2a" stroke="#2a2a2a" stroke-width="0.2" letter-spacing="-0.3">Oct 05</text>
<text x="2239.3" y="990.0" text-anchor="middle" font-size="16" fill="#2a2a2a" stroke="#2a2a2a" stroke-width="0.2" letter-spacing="-0.3">Oct 12</text>
<text x="2379.8" y="990.0" text-anchor="middle" font-size="16" fill="#2a2a2a" stroke="#2a2a2a" stroke-width="0.2" letter-spacing="-0.3">Oct 19</text>
<text x="0" y="0" transform="translate(1365,817) rotate(-90)" text-anchor="middle" font-size="16" fill="#2a2a2a">Number of Sessions</text>
<rect x="1666.3" y="1041.5" width="12.2" height="11.5" fill="#191970"/>
<text x="1702.9" y="1053.4" text-anchor="start" font-size="16" fill="#2a2a2a" stroke="#2a2a2a" stroke-width="0.2" letter-spacing="-0.15">Faulted Sessions</text>
<rect x="1851.7" y="1041.5" width="12.2" height="11.5" fill="#6666ff"/>
<text x="1887.6" y="1053.4" text-anchor="start" font-size="16" fill="#2a2a2a" stroke="#2a2a2a" stroke-width="0.2" letter-spacing="-0.15">Zero kWh Sessions</text>
<rect x="2036.3" y="1041.5" width="12.2" height="11.5" fill="#dfdfff"/>
<text x="2072.9" y="1053.4" text-anchor="start" font-size="16" fill="#2a2a2a" stroke="#2a2a2a" stroke-width="0.2" letter-spacing="-0.15">Null Sessions</text>
<line x1="256.8" y1="1394.8" x2="256.8" y2="1674.8" stroke="#ececec" stroke-width="1"/>
<line x1="397.5" y1="1394.8" x2="397.5" y2="1674.8" stroke="#ececec" stroke-width="1"/>
<line x1="538.2" y1="1394.8" x2="538.2" y2="1674.8" stroke="#ececec" stroke-width="1"/>
<line x1="678.9" y1="1394.8" x2="678.9" y2="1674.8" stroke="#ececec" stroke-width="1"/>
<line x1="819.6" y1="1394.8" x2="819.6" y2="1674.8" stroke="#ececec" stroke-width="1"/>
<line x1="960.3" y1="1394.8" x2="960.3" y2="1674.8" stroke="#ececec" stroke-width="1"/>
<line x1="1101.0" y1="1394.8" x2="1101.0" y2="1674.8" stroke="#ececec" stroke-width="1"/>
<rect x="129.9" y="1634.8" width="16.2" height="40.0" fill="#6666ff"/>
<rect x="150.0" y="1648.2" width="16.2" height="26.6" fill="#6666ff"/>
<rect x="170.1" y="1634.8" width="16.2" height="40.0" fill="#6666ff"/>
<rect x="190.2" y="1648.2" width="16.2" height="26.6" fill="#6666ff"/>
<rect x="210.3" y="1661.5" width="16.2" height="13.3" fill="#6666ff"/>
<rect x="230.4" y="1661.5" width="16.2" height="13.3" fill="#6666ff"/>
<rect x="250.5" y="1661.5" width="16.2" height="13.3" fill="#6666ff"/>
<rect x="270.6" y="1515.0" width="16.2" height="159.8" fill="#6666ff"/>
<rect x="290.7" y="1621.5" width="16.2" height="53.3" fill="#6666ff"/>
<rect x="310.8" y="1621.5" width="16.2" height="53.3" fill="#6666ff"/>
<rect x="330.9" y="1568.2" width="16.2" height="106.6" fill="#6666ff"/>
<rect x="371.1" y="1554.9" width="16.2" height="119.9" fill="#6666ff"/>
<rect x="391.2" y="1648.2" width="16.2" height="26.6" fill="#6666ff"/>
<rect x="411.3" y="1488.3" width="16.2" height="186.5" fill="#6666ff"/>
<rect x="431.4" y="1568.2" width="16.2" height="106.6" fill="#6666ff"/>
<rect x="451.5" y="1608.2" width="16.2" height="66.6" fill="#6666ff"/>
<rect x="471.6" y="1408.4" width="16.2" height="266.4" fill="#6666ff"/>
<rect x="491.7" y="1661.5" width="16.2" height="13.3" fill="#6666ff"/>
<rect x="511.8" y="1634.8" width="16.2" height="40.0" fill="#6666ff"/>
<rect x="531.9" y="1648.2" width="16.2" height="26.6" fill="#6666ff"/>
<rect x="552.0" y="1634.8" width="16.2" height="40.0" fill="#6666ff"/>
<rect x="572.1" y="1594.9" width="16.2" height="79.9" fill="#6666ff"/>
<rect x="592.2" y="1661.5" width="16.2" height="13.3" fill="#6666ff"/>
<rect x="612.3" y="1621.5" width="16.2" height="53.3" fill="#6666ff"/>
<rect x="632.4" y="1648.2" width="16.2" height="26.6" fill="#6666ff"/>
<rect x="652.5" y="1581.6" width="16.2" height="93.2" fill="#6666ff"/>
<rect x="672.6" y="1648.2" width="16.2" height="26.6" fill="#6666ff"/>
<rect x="692.7" y="1634.8" width="16.2" height="40.0" fill="#6666ff"/>
<rect x="712.8" y="1661.5" width="16.2" height="13.3" fill="#6666ff"/>
<rect x="732.9" y="1648.2" width="16.2" height="26.6" fill="#6666ff"/>
<rect x="753.0" y="1621.5" width="16.2" height="53.3" fill="#6666ff"/>
<rect x="773.1" y="1581.6" width="16.2" height="93.2" fill="#6666ff"/>
<rect x="793.2" y="1634.8" width="16.2" height="40.0" fill="#6666ff"/>
<rect x="813.3" y="1661.5" width="16.2" height="13.3" fill="#6666ff"/>
<rect x="833.4" y="1515.0" width="16.2" height="159.8" fill="#6666ff"/>
<rect x="853.5" y="1621.5" width="16.2" height="53.3" fill="#6666ff"/>
<rect x="873.6" y="1568.2" width="16.2" height="106.6" fill="#6666ff"/>
<rect x="893.7" y="1608.2" width="16.2" height="66.6" fill="#6666ff"/>
<rect x="913.8" y="1594.9" width="16.2" height="79.9" fill="#6666ff"/>
<rect x="933.9" y="1648.2" width="16.2" height="26.6" fill="#6666ff"/>
<rect x="954.0" y="1648.2" width="16.2" height="26.6" fill="#6666ff"/>
<rect x="974.1" y="1634.8" width="16.2" height="40.0" fill="#6666ff"/>
<rect x="994.2" y="1608.2" width="16.2" height="66.6" fill="#6666ff"/>
<rect x="1014.3" y="1621.5" width="16.2" height="53.3" fill="#6666ff"/>
<rect x="1034.4" y="1621.5" width="16.2" height="53.3" fill="#6666ff"/>
<rect x="1054.5" y="1621.5" width="16.2" height="53.3" fill="#6666ff"/>
<rect x="1074.6" y="1608.2" width="16.2" height="66.6" fill="#6666ff"/>
<rect x="1114.8" y="1634.8" width="16.2" height="40.0" fill="#6666ff"/>
<rect x="1134.9" y="1648.2" width="16.2" height="26.6" fill="#6666ff"/>
<line x1="127.0" y1="1394.8" x2="127.0" y2="1675.8" stroke="#2b2b2b" stroke-width="2"/>
<line x1="126.0" y1="1674.8" x2="1152.0" y2="1674.8" stroke="rgba(25,25,25,0.66)" stroke-width="2"/>
<text x="122.5" y="1680.8" text-anchor="end" font-size="17" fill="#2a2a2a" stroke="#2a2a2a" stroke-width="0.2" >0</text>
<text x="122.5" y="1614.2" text-anchor="end" font-size="17" fill="#2a2a2a" stroke="#2a2a2a" stroke-width="0.2" >5</text>
<text x="122.5" y="1547.6" text-anchor="end" font-size="17" fill="#2a2a2a" stroke="#2a2a2a" stroke-width="0.2" >10</text>
<text x="122.5" y="1481.0" text-anchor="end" font-size="17" fill="#2a2a2a" stroke="#2a2a2a" stroke-width="0.2" >15</text>
<text x="122.5" y="1414.4" text-anchor="end" font-size="17" fill="#2a2a2a" stroke="#2a2a2a" stroke-width="0.2" >20</text>
<text x="256.8" y="1695.0" text-anchor="middle" font-size="16" fill="#2a2a2a" stroke="#2a2a2a" stroke-width="0.2" letter-spacing="-0.3">Sep 07</text>
<text x="397.5" y="1695.0" text-anchor="middle" font-size="16" fill="#2a2a2a" stroke="#2a2a2a" stroke-width="0.2" letter-spacing="-0.3">Sep 14</text>
<text x="538.2" y="1695.0" text-anchor="middle" font-size="16" fill="#2a2a2a" stroke="#2a2a2a" stroke-width="0.2" letter-spacing="-0.3">Sep 21</text>
<text x="678.9" y="1695.0" text-anchor="middle" font-size="16" fill="#2a2a2a" stroke="#2a2a2a" stroke-width="0.2" letter-spacing="-0.3">Sep 28</text>
<text x="819.6" y="1695.0" text-anchor="middle" font-size="16" fill="#2a2a2a" stroke="#2a2a2a" stroke-width="0.2" letter-spacing="-0.3">Oct 05</text>
<text x="960.3" y="1695.0" text-anchor="middle" font-size="16" fill="#2a2a2a" stroke="#2a2a2a" stroke-width="0.2" letter-spacing="-0.3">Oct 12</text>
<text x="1101.0" y="1695.0" text-anchor="middle" font-size="16" fill="#2a2a2a" stroke="#2a2a2a" stroke-width="0.2" letter-spacing="-0.3">Oct 19</text>
<line x1="1536.5" y1="1394.8" x2="1536.5" y2="1674.8" stroke="#ececec" stroke-width="1"/>
<line x1="1677.1" y1="1394.8" x2="1677.1" y2="1674.8" stroke="#ececec" stroke-width="1"/>
<line x1="1817.6" y1="1394.8" x2="1817.6" y2="1674.8" stroke="#ececec" stroke-width="1"/>
<line x1="1958.2" y1="1394.8" x2="1958.2" y2="1674.8" stroke="#ececec" stroke-width="1"/>
<line x1="2098.7" y1="1394.8" x2="2098.7" y2="1674.8" stroke="#ececec" stroke-width="1"/>
<line x1="2239.3" y1="1394.8" x2="2239.3" y2="1674.8" stroke="#ececec" stroke-width="1"/>
<line x1="2379.8" y1="1394.8" x2="2379.8" y2="1674.8" stroke="#ececec" stroke-width="1"/>
<rect x="1409.7" y="1609.7" width="16.2" height="65.1" fill="#dfdfff"/>
<rect x="1429.8" y="1655.2" width="16.2" height="19.6" fill="#dfdfff"/>
<rect x="1449.9" y="1577.2" width="16.2" height="97.6" fill="#dfdfff"/>
<rect x="1470.0" y="1635.7" width="16.2" height="39.1" fill="#dfdfff"/>
<rect x="1490.1" y="1525.2" width="16.2" height="149.6" fill="#dfdfff"/>
<rect x="1510.1" y="1616.2" width="16.2" height="58.6" fill="#dfdfff"/>
<rect x="1530.2" y="1622.7" width="16.2" height="52.1" fill="#dfdfff"/>
<rect x="1550.3" y="1655.2" width="16.2" height="19.6" fill="#dfdfff"/>
<rect x="1570.4" y="1570.7" width="16.2" height="104.1" fill="#dfdfff"/>
<rect x="1590.4" y="1616.2" width="16.2" height="58.6" fill="#dfdfff"/>
<rect x="1610.5" y="1603.2" width="16.2" height="71.6" fill="#dfdfff"/>
<rect x="1630.6" y="1590.2" width="16.2" height="84.6" fill="#dfdfff"/>
<rect x="1650.7" y="1531.7" width="16.2" height="143.1" fill="#dfdfff"/>
<rect x="1670.8" y="1596.7" width="16.2" height="78.1" fill="#dfdfff"/>
<rect x="1690.8" y="1466.7" width="16.2" height="208.1" fill="#dfdfff"/>
<rect x="1710.9" y="1466.7" width="16.2" height="208.1" fill="#dfdfff"/>
<rect x="1731.0" y="1557.7" width="16.2" height="117.1" fill="#dfdfff"/>
<rect x="1751.1" y="1648.7" width="16.2" height="26.1" fill="#dfdfff"/>
<rect x="1771.2" y="1668.2" width="16.2" height="6.6" fill="#dfdfff"/>
<rect x="1791.2" y="1603.2" width="16.2" height="71.6" fill="#dfdfff"/>
<rect x="1811.3" y="1661.7" width="16.2" height="13.1" fill="#dfdfff"/>
<rect x="1831.4" y="1551.2" width="16.2" height="123.6" fill="#dfdfff"/>
<rect x="1851.5" y="1538.2" width="16.2" height="136.6" fill="#dfdfff"/>
<rect x="1871.5" y="1551.2" width="16.2" height="123.6" fill="#dfdfff"/>
<rect x="1891.6" y="1596.7" width="16.2" height="78.1" fill="#dfdfff"/>
<rect x="1911.7" y="1531.7" width="16.2" height="143.1" fill="#dfdfff"/>
<rect x="1931.8" y="1590.2" width="16.2" height="84.6" fill="#dfdfff"/>
<rect x="1951.9" y="1486.2" width="16.2" height="188.6" fill="#dfdfff"/>
<rect x="1971.9" y="1661.7" width="16.2" height="13.1" fill="#dfdfff"/>
<rect x="1992.0" y="1603.2" width="16.2" height="71.6" fill="#dfdfff"/>
<rect x="2012.1" y="1590.2" width="16.2" height="84.6" fill="#dfdfff"/>
<rect x="2032.2" y="1564.2" width="16.2" height="110.6" fill="#dfdfff"/>
<rect x="2052.2" y="1551.2" width="16.2" height="123.6" fill="#dfdfff"/>
<rect x="2072.3" y="1531.7" width="16.2" height="143.1" fill="#dfdfff"/>
<rect x="2092.4" y="1564.2" width="16.2" height="110.6" fill="#dfdfff"/>
<rect x="2112.5" y="1525.2" width="16.2" height="149.6" fill="#dfdfff"/>
<rect x="2132.6" y="1577.2" width="16.2" height="97.6" fill="#dfdfff"/>
<rect x="2152.6" y="1629.2" width="16.2" height="45.6" fill="#dfdfff"/>
<rect x="2172.7" y="1401.7" width="16.2" height="273.1" fill="#dfdfff"/>
<rect x="2192.8" y="1577.2" width="16.2" height="97.6" fill="#dfdfff"/>
<rect x="2212.9" y="1648.7" width="16.2" height="26.1" fill="#dfdfff"/>
<rect x="2233.0" y="1609.7" width="16.2" height="65.1" fill="#dfdfff"/>
<rect x="2253.0" y="1616.2" width="16.2" height="58.6" fill="#dfdfff"/>
<rect x="2273.1" y="1544.7" width="16.2" height="130.1" fill="#dfdfff"/>
<rect x="2293.2" y="1609.7" width="16.2" height="65.1" fill="#dfdfff"/>
<rect x="2313.3" y="1544.7" width="16.2" height="130.1" fill="#dfdfff"/>
<rect x="2333.3" y="1505.7" width="16.2" height="169.1" fill="#dfdfff"/>
<rect x="2353.4" y="1590.2" width="16.2" height="84.6" fill="#dfdfff"/>
<rect x="2373.5" y="1655.2" width="16.2" height="19.6" fill="#dfdfff"/>
<rect x="2393.6" y="1642.2" width="16.2" height="32.6" fill="#dfdfff"/>
<rect x="2413.7" y="1603.2" width="16.2" height="71.6" fill="#dfdfff"/>
<line x1="1407.0" y1="1394.8" x2="1407.0" y2="1675.8" stroke="#2b2b2b" stroke-width="2"/>
<line x1="1406.0" y1="1674.8" x2="2431.0" y2="1674.8" stroke="rgba(25,25,25,0.66)" stroke-width="2"/>
<text x="1402.5" y="1622.2" text-anchor="end" font-size="17" fill="#2a2a2a" stroke="#2a2a2a" stroke-width="0.2" >20</text>
<text x="1402.5" y="1557.2" text-anchor="end" font-size="17" fill="#2a2a2a" stroke="#2a2a2a" stroke-width="0.2" >30</text>
<text x="1402.5" y="1492.2" text-anchor="end" font-size="17" fill="#2a2a2a" stroke="#2a2a2a" stroke-width="0.2" >40</text>
<text x="1402.5" y="1427.2" text-anchor="end" font-size="17" fill="#2a2a2a" stroke="#2a2a2a" stroke-width="0.2" >50</text>
<text x="1536.5" y="1695.0" text-anchor="middle" font-size="16" fill="#2a2a2a" stroke="#2a2a2a" stroke-width="0.2" letter-spacing="-0.3">Sep 07</text>
<text x="1677.1" y="1695.0" text-anchor="middle" font-size="16" fill="#2a2a2a" stroke="#2a2a2a" stroke-width="0.2" letter-spacing="-0.3">Sep 14</text>
<text x="1817.6" y="1695.0" text-anchor="middle" font-size="16" fill="#2a2a2a" stroke="#2a2a2a" stroke-width="0.2" letter-spacing="-0.3">Sep 21</text>
<text x="1958.2" y="1695.0" text-anchor="middle" font-size="16" fill="#2a2a2a" stroke="#2a2a2a" stroke-width="0.2" letter-spacing="-0.3">Sep 28</text>
<text x="2098.7" y="1695.0" text-anchor="middle" font-size="16" fill="#2a2a2a" stroke="#2a2a2a" stroke-width="0.2" letter-spacing="-0.3">Oct 05</text>
<text x="2239.3" y="1695.0" text-anchor="middle" font-size="16" fill="#2a2a2a" stroke="#2a2a2a" stroke-width="0.2" letter-spacing="-0.3">Oct 12</text>
<text x="2379.8" y="1695.0" text-anchor="middle" font-size="16" fill="#2a2a2a" stroke="#2a2a2a" stroke-width="0.2" letter-spacing="-0.3">Oct 19</text>
</svg>
</body></html>
